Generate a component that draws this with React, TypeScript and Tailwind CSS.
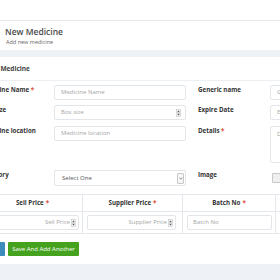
import React from 'react'

function Spinner() {
  return (
    <svg width="5" height="8" viewBox="0 0 5 8" className="shrink-0">
      <rect x="0.5" y="0.5" width="4" height="7" fill="#f4f4f4" stroke="#bbb" strokeWidth="0.5" />
      <path d="M1.2 3.2 L2.5 1.6 L3.8 3.2 Z" fill="#555" />
      <path d="M1.2 4.8 L2.5 6.4 L3.8 4.8 Z" fill="#555" />
    </svg>
  )
}

function Label({ text, req, w = 'w-[73px]' }: { text: string; req?: boolean; w?: string }) {
  return (
    <div className={`${w} shrink-0 text-[6.2px] leading-[9px] font-bold text-[#333] whitespace-nowrap`}>
      {text}
      {req && <span className="text-[#dd4b39]"> *</span>}
    </div>
  )
}

function Input({ ph, spin }: { ph: string; spin?: boolean }) {
  return (
    <div className="w-[132px] h-[15px] shrink-0 border border-[#e2e5ea] rounded-[2px] bg-white flex items-center pl-[6px] pr-[4px]">
      <span className="flex-1 text-[6px] text-[#a5a5a5] whitespace-nowrap overflow-hidden">{ph}</span>
      {spin && <Spinner />}
    </div>
  )
}

export default function App() {
  return (
    <div className="w-[280px] h-[280px] overflow-hidden bg-white font-['Open_Sans',sans-serif] text-[#333]">
      {/* top bar */}
      <div className="h-[21px] border-b border-[#e8e8e8]" />

      {/* page header */}
      <div className="h-[29px] pl-[5px] pt-[5px]">
        <h1 className="text-[8.5px] leading-[12px] font-semibold text-[#4a4a4a]">New Medicine</h1>
        <p className="pl-[1px] text-[5.5px] leading-[8px] text-[#666]">Add new medicine</p>
      </div>
      <div className="h-[7px] bg-[#eef1f6]" />

      {/* panel */}
      <div className="bg-white">
        <div className="h-[24px] border-b border-[#eceff3] flex items-center -ml-[14px]">
          <span className="text-[6.5px] font-bold text-[#444]">Add Medicine</span>
        </div>

        <div className="-ml-[19px] w-[480px] pt-[4px]">
          <div className="flex items-start mb-[5px]">
            <Label text="Medicine Name" req />
            <Input ph="Medicine Name" />
            <div className="w-[12px] shrink-0" />
            <Label text="Generic name" w="w-[72px]" />
            <Input ph="Generic name" />
          </div>
          <div className="flex items-start mb-[6px]">
            <Label text="Box Size" />
            <Input ph="Box size" spin />
            <div className="w-[12px] shrink-0" />
            <Label text="Expire Date" w="w-[72px]" />
            <Input ph="Expire Date" />
          </div>
          <div className="flex items-start mb-[7px]">
            <Label text="Medicine location" />
            <Input ph="Medicine location" />
            <div className="w-[12px] shrink-0" />
            <Label text="Details" req w="w-[72px]" />
            <div className="w-[132px] h-[37px] shrink-0 border border-[#e2e5ea] rounded-[2px] pl-[6px] pt-[3px] text-[6px] text-[#a5a5a5]">
              Details
            </div>
          </div>
          <div className="flex items-start">
            <Label text="Category" />
            <div className="w-[132px] h-[16px] shrink-0 border border-[#e2e5ea] rounded-[2px] flex items-center pl-[7px] pr-[1px]">
              <span className="flex-1 text-[6px] text-[#555]">Select One</span>
              <div className="w-[7px] h-[11px] border border-[#c8c8c8] rounded-[1px] bg-[#f6f6f6] flex items-center justify-center">
                <svg width="4" height="3" viewBox="0 0 4 3">
                  <path d="M0.5 0.6 L2 2.2 L3.5 0.6" fill="none" stroke="#555" strokeWidth="0.6" />
                </svg>
              </div>
            </div>
            <div className="w-[12px] shrink-0" />
            <Label text="Image" w="w-[72px]" />
            <div className="mt-[3px] ml-[2px] w-[20px] h-[10px] border border-[#c8c8c8] rounded-[1px] bg-[#efefef]" />
          </div>
        </div>

        {/* price table */}
        <div className="-ml-[17px] mt-[8px] w-[400px] border-t border-b border-[#e4e7eb]">
          <div className="flex h-[17px] border-b border-[#e4e7eb]">
            <div className="w-[100px] border-r border-[#e4e7eb] flex items-center justify-center text-[6.2px] font-bold text-[#333]">
              Sell Price <span className="text-[#dd4b39] ml-[2px]">*</span>
            </div>
            <div className="w-[100px] border-r border-[#e4e7eb] flex items-center justify-center text-[6.2px] font-bold text-[#333]">
              Supplier Price <span className="text-[#dd4b39] ml-[2px]">*</span>
            </div>
            <div className="w-[93px] border-r border-[#e4e7eb] flex items-center justify-center text-[6.2px] font-bold text-[#333]">
              Batch No <span className="text-[#dd4b39] ml-[2px]">*</span>
            </div>
          </div>
          <div className="flex h-[21px]">
            <div className="w-[100px] border-r border-[#e4e7eb] flex items-start pt-[3px] pl-[4px]">
              <div className="w-[92px] h-[15px] border border-[#e2e5ea] rounded-[2px] flex items-center justify-end pr-[2px] gap-[1px]">
                <span className="text-[6px] text-[#a5a5a5]">Sell Price</span>
                <Spinner />
              </div>
            </div>
            <div className="w-[100px] border-r border-[#e4e7eb] flex items-start pt-[3px] pl-[4px]">
              <div className="w-[89px] h-[15px] border border-[#e2e5ea] rounded-[2px] flex items-center justify-end pr-[2px] gap-[1px]">
                <span className="text-[6px] text-[#a5a5a5]">Supplier Price</span>
                <Spinner />
              </div>
            </div>
            <div className="w-[93px] border-r border-[#e4e7eb] flex items-start pt-[3px] pl-[4px]">
              <div className="w-[85px] h-[15px] border border-[#e2e5ea] rounded-[2px] flex items-center pl-[5px]">
                <span className="text-[6px] text-[#a5a5a5]">Batch No</span>
              </div>
            </div>
          </div>
        </div>

        {/* buttons */}
        <div className="-ml-[22px] mt-[8px] flex gap-[3px] h-[14px]">
          <button className="w-[27px] h-[14px] bg-[#3c8dbc] rounded-[1px] text-[6px] text-white">Save</button>
          <button className="w-[71px] h-[14px] bg-[#45a21f] rounded-[1px] text-[6px] text-white">Save And Add Another</button>
        </div>
        <div className="h-[8px]" />
      </div>
      <div className="h-[30px] bg-[#eef1f6]" />
    </div>
  )
}
